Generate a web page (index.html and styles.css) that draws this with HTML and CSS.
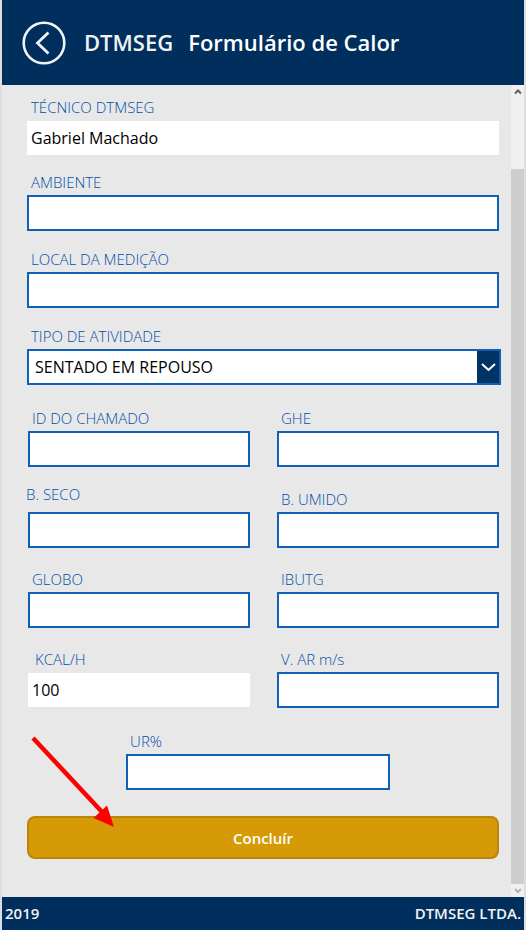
FILE: index.html
```html
<!DOCTYPE html>
<html lang="pt-BR">
<head>
<meta charset="utf-8">
<meta name="viewport" content="width=device-width, initial-scale=1">
<title>DTMSEG - Formulário de Calor</title>
<link rel="stylesheet" href="styles.css">
</head>
<body>
<div class="app">
  <header class="topbar">
    <button class="back" type="button" aria-label="Voltar">
      <svg viewBox="0 0 44 44" width="44" height="44" fill="none" stroke="#f2f2f2">
        <circle cx="22" cy="22" r="20.3" stroke-width="2.6"/>
        <path d="M26.5 11.5 15.5 22 26.5 32.500" stroke-width="2.800"/>
      </svg>
    </button>
    <span class="brand">DTMSEG</span>
    <h1 class="title">Formulário de Calor</h1>
  </header>

  <main class="content">
    <form class="form">
      <div class="stack">
        <div class="field">
          <label for="tecnico">TÉCNICO DTMSEG</label>
          <input class="plain" id="tecnico" type="text" value="Gabriel Machado" readonly>
        </div>
        <div class="field">
          <label for="ambiente">AMBIENTE</label>
          <input id="ambiente" type="text">
        </div>
        <div class="field">
          <label for="local">LOCAL DA MEDIÇÃO</label>
          <input id="local" type="text">
        </div>
        <div class="field">
          <label for="tipo">TIPO DE ATIVIDADE</label>
          <div class="select">
            <select id="tipo"><option>SENTADO EM REPOUSO</option></select>
            <svg class="chevron" viewBox="0 0 22 32" width="22" height="32" fill="none" stroke="#fff" stroke-width="2" aria-hidden="true"><path d="M5 13 11.500 19 18 13"/></svg>
          </div>
        </div>
      </div>

      <div class="pairs">
        <div class="field">
          <label for="chamado">ID DO CHAMADO</label>
          <input id="chamado" type="text">
        </div>
        <div class="field">
          <label for="ghe">GHE</label>
          <input id="ghe" type="text">
        </div>
        <div class="field raised">
          <label for="seco">B. SECO</label>
          <input id="seco" type="text">
        </div>
        <div class="field">
          <label for="umido">B. UMIDO</label>
          <input id="umido" type="text">
        </div>
        <div class="field">
          <label for="globo">GLOBO</label>
          <input id="globo" type="text">
        </div>
        <div class="field">
          <label for="ibutg">IBUTG</label>
          <input id="ibutg" type="text">
        </div>
        <div class="field indented">
          <label for="kcal">KCAL/H</label>
          <input class="plain" id="kcal" type="text" value="100" readonly>
        </div>
        <div class="field">
          <label for="var">V. AR m/s</label>
          <input id="var" type="text">
        </div>
      </div>

      <div class="field narrow">
        <label for="ur">UR%</label>
        <input id="ur" type="text">
      </div>

      <div class="actions">
        <button class="submit" type="button">Concluír</button>
        <svg class="pointer" viewBox="0 0 90 92" width="90" height="92" aria-hidden="true">
          <path d="M6 2 76 77" stroke="#f00" stroke-width="4.500" fill="none"/>
          <path d="M87 91 66.500 82 80 69.500Z" fill="#f00"/>
        </svg>
      </div>
    </form>

    <div class="scrollbar" aria-hidden="true">
      <svg viewBox="0 0 13 13" width="13" height="13" fill="none" stroke="#606060" stroke-width="2"><path d="M4 8.500 7 5.500 10 8.500"/></svg>
      <div class="track"><div class="thumb"></div></div>
      <svg viewBox="0 0 13 13" width="13" height="13" fill="none" stroke="#b4b4b4" stroke-width="2"><path d="M4 5 7 8 10 5"/></svg>
    </div>
  </main>

  <footer class="bottombar">
    <span>2019</span>
    <span>DTMSEG LTDA.</span>
  </footer>
</div>
</body>
</html>
```
FILE: styles.css
```css
* {
  box-sizing: border-box;
}

body {
  margin: 0;
  background: #dedede;
  font-family: "Open Sans", "Noto Sans", sans-serif;
}

.app {
  display: flex;
  flex-direction: column;
  min-height: 100vh;
  margin: 0 2px;
  background: #e8e8e8;
}

.topbar {
  display: flex;
  align-items: center;
  height: 85px;
  padding-left: 20px;
  background: #002e5d;
  color: #fff;
  font-size: 22px;
  font-weight: 600;
  line-height: 28px;
}

.back {
  display: flex;
  margin-right: 18px;
  padding: 0;
  border: 0;
  background: none;
  cursor: pointer;
}

.brand,
.title {
  padding-bottom: 2px;
}

.brand {
  margin-right: 15px;
  color: #f2f2f2;
}

.title {
  margin: 0;
  font: inherit;
}

.content {
  display: flex;
  flex: 1;
}

.form {
  flex: 1;
  padding: 12px 12px 38px 25px;
}

.stack {
  display: grid;
  gap: 18px;
}

.pairs {
  display: grid;
  grid-template-columns: 1fr 1fr;
  align-items: end;
  gap: 21px 27px;
  margin: 23px 0;
  padding-left: 1px;
}

.field {
  display: flex;
  flex-direction: column;
  gap: 3px;
}

.field label {
  padding-left: 4px;
  color: #004fa8;
  font-size: 15px;
  font-weight: 300;
  line-height: 20px;
}

.raised {
  gap: 8px;
  margin-top: -4px;
}

.raised label {
  padding-left: 0;
  margin-left: -2px;
}

.indented label {
  padding-left: 7px;
}

.field input,
.field select {
  width: 100%;
  height: 36px;
  margin: 0;
  padding: 0 4px;
  border: 2px solid #0f61b5;
  border-radius: 0;
  background: #fff;
  color: #000;
  font-family: inherit;
  font-size: 16px;
  font-weight: 400;
}

.field .plain {
  height: 34px;
  margin: 1px 0;
  border: 0;
}

.stack .plain {
  margin-bottom: -1px;
}

.select {
  position: relative;
  margin-right: -2px;
}

.field select {
  padding: 0 28px 0 6px;
  appearance: none;
}

.chevron {
  position: absolute;
  top: 2px;
  right: 2px;
  background: #003366;
  pointer-events: none;
}

.narrow {
  width: 56%;
  margin-left: 21%;
}

.actions {
  position: relative;
  margin-top: 26px;
}

.submit {
  display: block;
  width: 100%;
  height: 43px;
  border: 2px solid #b9850a;
  border-radius: 8px;
  background: #d69a07;
  color: #fff;
  font-family: inherit;
  font-size: 15px;
  font-weight: 600;
  cursor: pointer;
}

.pointer {
  position: absolute;
  top: -80px;
  left: 0;
  pointer-events: none;
}

.scrollbar {
  display: flex;
  flex-direction: column;
  width: 13px;
  background: #f0f0f0;
}

.track {
  flex: 1;
  display: flex;
  align-items: flex-end;
}

.thumb {
  width: 100%;
  height: 91%;
  background: #cdcdcd;
}

.bottombar {
  display: flex;
  align-items: center;
  justify-content: space-between;
  height: 34px;
  padding: 0 3px 3px;
  background: #002e5d;
  color: #f2f2f2;
  font-size: 15px;
  font-weight: 600;
}
```
